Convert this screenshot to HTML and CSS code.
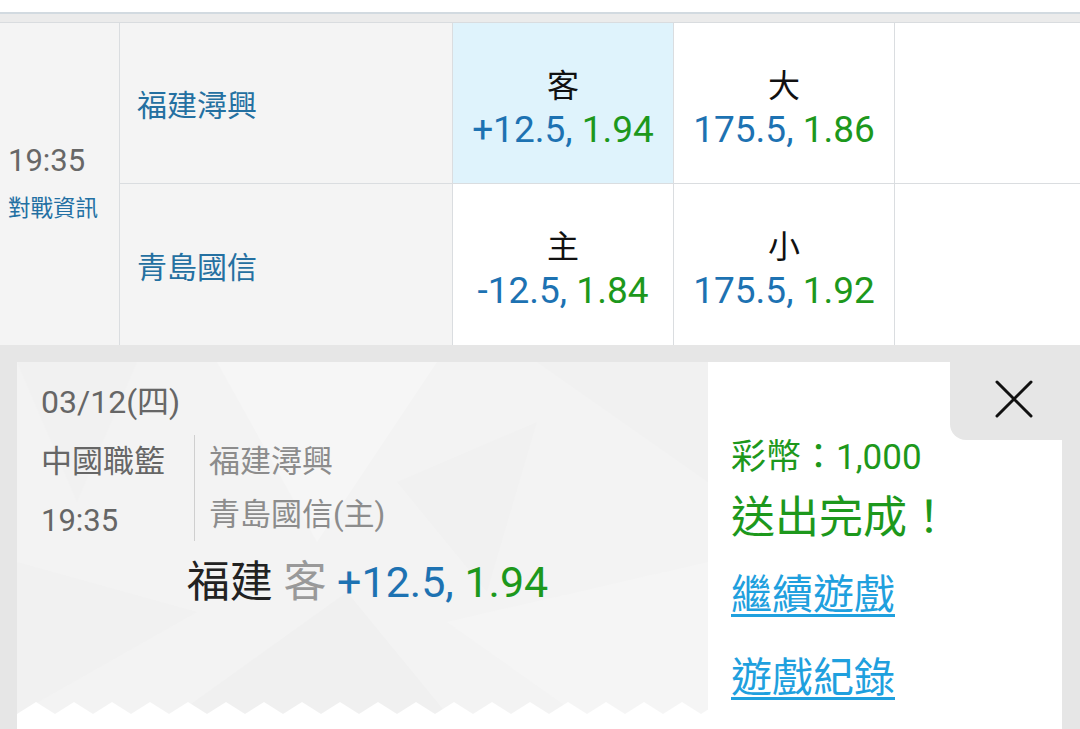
FILE: index.html
```html
<!DOCTYPE html>
<html lang="zh-Hant">
<head>
<meta charset="utf-8">
<title>投注完成</title>
<link rel="stylesheet" href="styles.css">
</head>
<body>
<div class="page">
  <div class="top-white"></div>
  <div class="top-strip"></div>

  <div class="odds-table">
    <div class="cell time-cell">
      <div class="time">19:35</div>
      <div class="info-link">對戰資訊</div>
    </div>
    <div class="cell team-cell">福建潯興</div>
    <div class="cell odd-cell selected">
      <div class="odd-label">客</div>
      <div class="odd-value"><span class="blue">+12.5,</span> <span class="green">1.94</span></div>
    </div>
    <div class="cell odd-cell">
      <div class="odd-label">大</div>
      <div class="odd-value"><span class="blue">175.5,</span> <span class="green">1.86</span></div>
    </div>
    <div class="cell empty-cell"></div>

    <div class="cell team-cell">青島國信</div>
    <div class="cell odd-cell">
      <div class="odd-label">主</div>
      <div class="odd-value"><span class="blue">-12.5,</span> <span class="green">1.84</span></div>
    </div>
    <div class="cell odd-cell">
      <div class="odd-label">小</div>
      <div class="odd-value"><span class="blue">175.5,</span> <span class="green">1.92</span></div>
    </div>
    <div class="cell empty-cell"></div>
  </div>

  <div class="overlay">
    <div class="card">
      <div class="ticket-col">
        <div class="ticket">
          <svg class="ticket-bg" viewBox="0 0 691 352" preserveAspectRatio="none" aria-hidden="true">
            <polygon points="0,0 120,0 60,140" fill="#f1f1f1"/>
            <polygon points="200,0 420,0 300,180" fill="#f6f6f6"/>
            <polygon points="520,0 691,0 691,120" fill="#f1f1f1"/>
            <polygon points="0,200 180,250 0,352" fill="#f1f1f1"/>
            <polygon points="160,352 330,230 430,352" fill="#f0f0f0"/>
            <polygon points="430,260 691,200 691,352 560,352" fill="#f5f5f5"/>
            <polygon points="380,120 520,60 470,230" fill="#f1f1f1"/>
          </svg>
          <div class="ticket-content">
            <div class="date">03/12(四)</div>
            <div class="match">
              <div class="match-left">
                <div class="league">中國職籃</div>
                <div class="match-time">19:35</div>
              </div>
              <div class="match-right">
                <div class="m-team">福建潯興</div>
                <div class="m-team">青島國信(主)</div>
              </div>
            </div>
            <div class="pick">
              <span class="pick-team">福建</span> <span class="pick-side">客</span> <span class="blue">+12.5,</span> <span class="green">1.94</span>
            </div>
          </div>
          <svg class="zigzag" width="100%" height="12" aria-hidden="true">
            <defs>
              <pattern id="zz" x="0" y="0" width="38" height="12" patternUnits="userSpaceOnUse">
                <polygon points="0,12 19,0 38,12" fill="#ffffff"/>
              </pattern>
            </defs>
            <rect x="0" y="0" width="100%" height="12" fill="url(#zz)"/>
          </svg>
        </div>
        <div class="ticket-tail"></div>
      </div>
      <div class="result-col">
        <div class="coins">彩幣：1,000</div>
        <div class="done">送出完成！</div>
        <a class="action" href="#">繼續遊戲</a>
        <a class="action second" href="#">遊戲紀錄</a>
      </div>
      <button class="close-btn" type="button" aria-label="關閉">
        <svg width="38" height="38" viewBox="0 0 38 38" aria-hidden="true">
          <path d="M2 2 L36 36 M36 2 L2 36" stroke="#111" stroke-width="3" stroke-linecap="round" fill="none"/>
        </svg>
      </button>
    </div>
  </div>
</div>
</body>
</html>
```

FILE: styles.css
```css
* {
  box-sizing: border-box;
}

html, body {
  margin: 0;
  padding: 0;
}

body {
  width: 1080px;
  height: 729px;
  overflow: hidden;
  background: #ffffff;
  font-family: "Roboto", "Noto Sans CJK TC", sans-serif;
}

.page {
  display: flex;
  flex-direction: column;
  height: 729px;
}

.top-white {
  flex-shrink: 0;
  height: 14px;
  background: #ffffff;
  border-bottom: 2px solid #d2dae0;
}

.top-strip {
  flex-shrink: 0;
  height: 9px;
  background: #ebebeb;
  border-bottom: 1px solid #d9dcdf;
}

.odds-table {
  flex-shrink: 0;
  display: grid;
  grid-template-columns: 119px 332px 220px 220px 1fr;
  grid-template-rows: 160px 161px;
  gap: 1px;
  background: #dadde0;
}

.cell {
  background: #ffffff;
}

.time-cell {
  grid-row: span 2;
  background: #f4f4f4;
  padding: 118px 0 0 8px;
  display: flex;
  flex-direction: column;
}

.time {
  font-size: 31px;
  line-height: 40px;
  color: #676767;
}

.info-link {
  margin-top: 14px;
  font-size: 22.5px;
  line-height: 26px;
  color: #2370a3;
}

.team-cell {
  background: #f4f4f4;
  display: flex;
  align-items: center;
  padding-left: 17px;
  font-size: 30px;
  color: #2470a1;
}

.odd-cell {
  display: flex;
  flex-direction: column;
  align-items: center;
  justify-content: center;
  padding-top: 12px;
}

.odd-cell.selected {
  background: #dff3fc;
}

.odd-label {
  font-size: 32px;
  line-height: 40px;
  color: #111111;
}

.odd-value {
  font-size: 37px;
  line-height: 46px;
  margin-top: 1px;
  white-space: nowrap;
}

.blue {
  color: #1d72b2;
}

.green {
  color: #1d981c;
}

.overlay {
  flex: 1;
  min-height: 0;
  overflow: hidden;
  background: #e6e6e6;
  padding: 17px 18px 0 17px;
}

.card {
  position: relative;
  display: flex;
  height: 400px;
  background: #ffffff;
}

.ticket-col {
  width: 691px;
  display: flex;
  flex-direction: column;
}

.ticket {
  position: relative;
  flex-shrink: 0;
  height: 352px;
  background: #f3f3f3;
  display: flex;
  flex-direction: column;
}

.ticket-bg {
  position: absolute;
  left: 0;
  top: 0;
  width: 100%;
  height: 100%;
}

.ticket-content {
  position: relative;
  padding: 20px 0 0 24px;
  flex: 1;
}

.zigzag {
  display: block;
  position: relative;
  flex-shrink: 0;
}

.ticket-tail {
  flex: 1;
  background: #ffffff;
}

.date {
  font-size: 32px;
  line-height: 40px;
  color: #666666;
}

.match {
  display: flex;
  margin-top: 13px;
}

.match-left {
  width: 153px;
  padding-top: 7px;
  font-size: 31px;
  line-height: 40px;
  color: #666666;
}

.match-time {
  margin-top: 19px;
}

.match-right {
  border-left: 1px solid #cfcfcf;
  padding: 7px 0 5px 14px;
  font-size: 31px;
  line-height: 40px;
  color: #8c8c8c;
}

.m-team + .m-team {
  margin-top: 13px;
}

.pick {
  margin-top: 16px;
  padding-right: 14px;
  text-align: center;
  font-size: 43px;
  line-height: 50px;
  white-space: nowrap;
}

.pick-team {
  color: #222222;
}

.pick-side {
  color: #999999;
}

.result-col {
  flex: 1;
  padding: 76px 0 0 23px;
  display: flex;
  flex-direction: column;
  align-items: flex-start;
}

.coins {
  font-size: 35px;
  line-height: 40px;
  color: #1d981c;
}

.done {
  margin-top: 15px;
  font-size: 44px;
  line-height: 50px;
  color: #1d981c;
}

.action {
  margin-top: 27px;
  font-size: 41px;
  line-height: 50px;
  color: #1fa0de;
  text-decoration: underline;
  text-decoration-thickness: 3px;
  text-underline-offset: 5px;
}

.action.second {
  margin-top: 33px;
}

.close-btn {
  position: absolute;
  top: 0;
  right: 0;
  width: 112px;
  height: 78px;
  border: none;
  margin: 0;
  padding: 0;
  background: #e6e6e6;
  border-bottom-left-radius: 16px;
  display: flex;
  align-items: center;
  justify-content: center;
  padding-left: 16px;
  padding-bottom: 4px;
}
```
